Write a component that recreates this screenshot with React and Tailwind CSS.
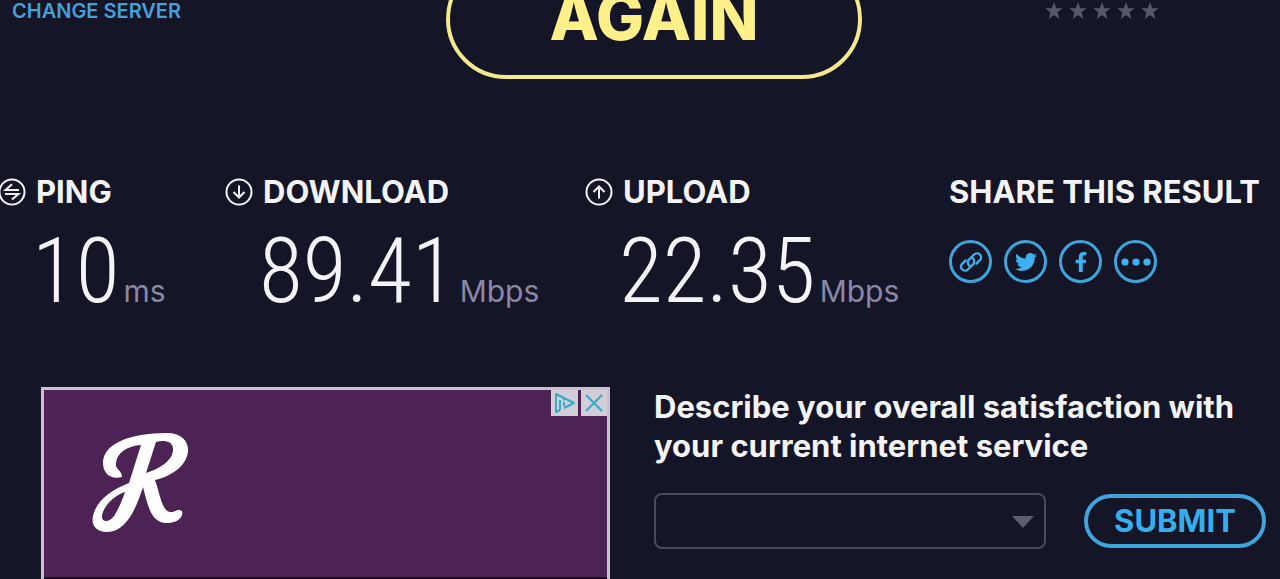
import { useState } from 'react';
import { FaFacebookF, FaTwitter } from 'react-icons/fa';

const ratings = [1, 2, 3, 4, 5];

const StarIcon = () => (
  <svg viewBox="0 0 18 18" className="size-[18px]" fill="currentColor" aria-hidden="true">
    <path d="M9 0l2.3 6.2h6.5l-5.3 4.1 2 6.7L9 13.2 3.500 17l2-6.700L.2 6.200h6.500z" />
  </svg>
);

const PingIcon = () => (
  <svg viewBox="0 0 28 28" className="size-7 shrink-0" fill="none" stroke="currentColor" strokeWidth="2" aria-hidden="true">
    <circle cx="14" cy="14" r="12.5" />
    <path d="M21 12H7.5L14 6.2M7 16h13.5L14 21.6" />
  </svg>
);

const DownloadIcon = () => (
  <svg viewBox="0 0 28 28" className="size-7 shrink-0" fill="none" stroke="currentColor" strokeWidth="2" aria-hidden="true">
    <circle cx="14" cy="14" r="12.5" />
    <path d="M14 7.5v12M8.5 14l5.5 5.5 5.5-5.5" />
  </svg>
);

const UploadIcon = () => (
  <svg viewBox="0 0 28 28" className="size-7 shrink-0" fill="none" stroke="currentColor" strokeWidth="2" aria-hidden="true">
    <circle cx="14" cy="14" r="12.5" />
    <path d="M14 20.5v-12M8.5 14 14 8.5l5.5 5.5" />
  </svg>
);

const LinkIcon = () => (
  <svg viewBox="0 0 24 24" className="size-7" fill="none" stroke="currentColor" strokeWidth="2" strokeLinecap="round" aria-hidden="true">
    <path d="M10.6 15.2a3.4 3.4 0 0 1-.5-5l4.6-4.6a3.4 3.4 0 0 1 4.9 4.8l-3 3" />
    <path d="M13.4 8.8a3.4 3.4 0 0 1 .5 5l-4.6 4.6a3.4 3.4 0 0 1-4.9-4.8l3-3" />
  </svg>
);

const DotsIcon = () => (
  <svg viewBox="0 0 32 32" className="size-8" fill="currentColor" aria-hidden="true">
    <circle cx="5" cy="16" r="3.6" />
    <circle cx="16" cy="16" r="3.6" />
    <circle cx="27" cy="16" r="3.6" />
  </svg>
);

const results = [
  { label: 'PING', value: '10', unit: 'ms', Icon: PingIcon },
  { label: 'DOWNLOAD', value: '89.41', unit: 'Mbps', Icon: DownloadIcon },
  { label: 'UPLOAD', value: '22.35', unit: 'Mbps', Icon: UploadIcon },
];

const Result = ({ label, value, unit, Icon }) => (
  <section className="min-w-0">
    <h2 className="flex items-center gap-2.5 text-[31px] leading-8 font-bold">
      <Icon />
      {label}
    </h2>
    <p className="mt-2 flex items-baseline gap-1 pl-[34px] whitespace-nowrap">
      <span className="font-['Roboto_Condensed',Roboto,sans-serif] text-[90px] leading-[112px] font-light">{value}</span>
      <span className="text-[30px] leading-8 text-[#8a88a6]">{unit}</span>
    </p>
  </section>
);

const ShareButton = ({ label, children }) => (
  <button
    type="button"
    aria-label={label}
    className="flex size-[43px] items-center justify-center rounded-full border-3 border-[#3fa3dc] text-[#3fb0f0]"
  >
    {children}
  </button>
);

const Advert = () => (
  <aside className="border-3 border-b-0 border-[#cdbfd3] bg-[#4c2354]">
    <div className="flex h-[189px] items-start justify-between border-b-2 border-[#1a0524]">
      <svg viewBox="14 15 226 189" className="h-[189px] w-[226px] shrink-0" aria-label="R logo" role="img">
        <path
          fill="#fff"
          fillRule="evenodd"
          d="M92 102C80 105 73 98 73 88C73 69 99 58 137 58C151 58 159 66 158 77C156 91 142 101 125 105C130 119 132 136 140 137C145 138 147 133 152 136C154 142 147 148 138 148C121 149 118 131 113 112C106 134 96 157 77 157C66 157 61 150 63 141C66 126 81 115 99 108L111 70C98 71 87 77 86 88C85 95 92 95 92 102ZM126 67C134 65 142 66 143 73C144 84 132 93 116 98ZM95 117C83 121 72 133 72 142C72 147 79 148 84 141C88 135 92 126 95 117Z"
        />
      </svg>
      <div className="flex shrink-0 gap-[3px]">
        <a href="#ad-info" aria-label="Ad choices" className="flex h-[26px] w-[27px] items-center justify-center bg-[#d2ced8] text-[#35abc6]">
          <svg viewBox="0 0 22 22" className="size-[22px]" fill="none" stroke="currentColor" strokeWidth="2" strokeLinejoin="round" aria-hidden="true">
            <path d="M6 18l-4 2V2l18 9-10 5M6 18V8" />
            <path d="M10 10v4M10 7v1.5" />
          </svg>
        </a>
        <button type="button" aria-label="Close ad" className="flex h-[26px] w-[26px] items-center justify-center bg-[#d2ced8] text-[#35abc6]">
          <svg viewBox="0 0 20 20" className="size-5" fill="none" stroke="currentColor" strokeWidth="2" aria-hidden="true">
            <path d="M2 2l16 16M18 2 2 18" />
          </svg>
        </button>
      </div>
    </div>
  </aside>
);

const Survey = () => {
  const [answer, setAnswer] = useState('');

  return (
    <form className="pr-3.5" onSubmit={(e) => e.preventDefault()}>
      <label htmlFor="satisfaction" className="block text-[31px] leading-[39px] font-bold">
        Describe your overall satisfaction with your current internet service
      </label>
      <div className="mt-7 flex items-center gap-[38px]">
        <div className="relative min-w-0 flex-1">
          <select
            id="satisfaction"
            value={answer}
            onChange={(e) => setAnswer(e.target.value)}
            className="block h-14 w-full appearance-none rounded-lg border-2 border-[#4a4a5c] bg-[#141526] px-4 text-xl"
          >
            <option value=""></option>
            {ratings.map((n) => (
              <option key={n} value={n}>{n}</option>
            ))}
          </select>
          <svg viewBox="0 0 22 12" className="pointer-events-none absolute top-[23px] right-3 h-3 w-[22px]" fill="#5d5d6f" aria-hidden="true">
            <path d="M0 0h22L11 12z" />
          </svg>
        </div>
        <button
          type="submit"
          className="h-[54px] w-[182px] shrink-0 rounded-full border-4 border-[#3fa3dc] text-[31px] leading-8 font-bold text-[#36aeee]"
        >
          SUBMIT
        </button>
      </div>
    </form>
  );
};

const App = () => {
  return (
    <main className="min-h-screen overflow-hidden bg-[#141526] font-['Inter',sans-serif] text-[#f4f4f8]">
      <header className="-mt-[41px] grid grid-cols-[446fr_416fr_418fr] items-center">
        <a href="#servers" className="mb-4 pl-3 text-[20px] leading-6 font-semibold text-[#469fdb]">
          CHANGE SERVER
        </a>
        <button
          type="button"
          className="h-[120px] rounded-full border-4 border-[#f5e98d] pb-1 text-[64px] leading-[60px] font-extrabold text-[#fff08a]"
        >
          AGAIN
        </button>
        <div className="mb-4 flex justify-center gap-1.5 pl-[62px] text-[#55566b]" aria-label="Rate your provider">
          {ratings.map((n) => (
            <button key={n} type="button" aria-label={`${n} stars`}>
              <StarIcon />
            </button>
          ))}
        </div>
      </header>

      <div className="-ml-0.5 grid grid-cols-[227fr_360fr_364fr_331fr] pt-[97px]">
        {results.map((result) => (
          <Result key={result.label} {...result} />
        ))}
        <section className="min-w-0 whitespace-nowrap">
          <h2 className="text-[31px] leading-8 font-bold">SHARE THIS RESULT</h2>
          <div className="mt-8 flex gap-3">
            <ShareButton label="Copy link"><LinkIcon /></ShareButton>
            <ShareButton label="Share on Twitter"><FaTwitter size={22} /></ShareButton>
            <ShareButton label="Share on Facebook"><FaFacebookF size={20} /></ShareButton>
            <ShareButton label="More options"><DotsIcon /></ShareButton>
          </div>
        </section>
      </div>

      <div className="grid grid-cols-[569fr_626fr] items-start gap-11 pt-[59px] pl-[41px]">
        <Advert />
        <Survey />
      </div>
    </main>
  );
};

export default App;
